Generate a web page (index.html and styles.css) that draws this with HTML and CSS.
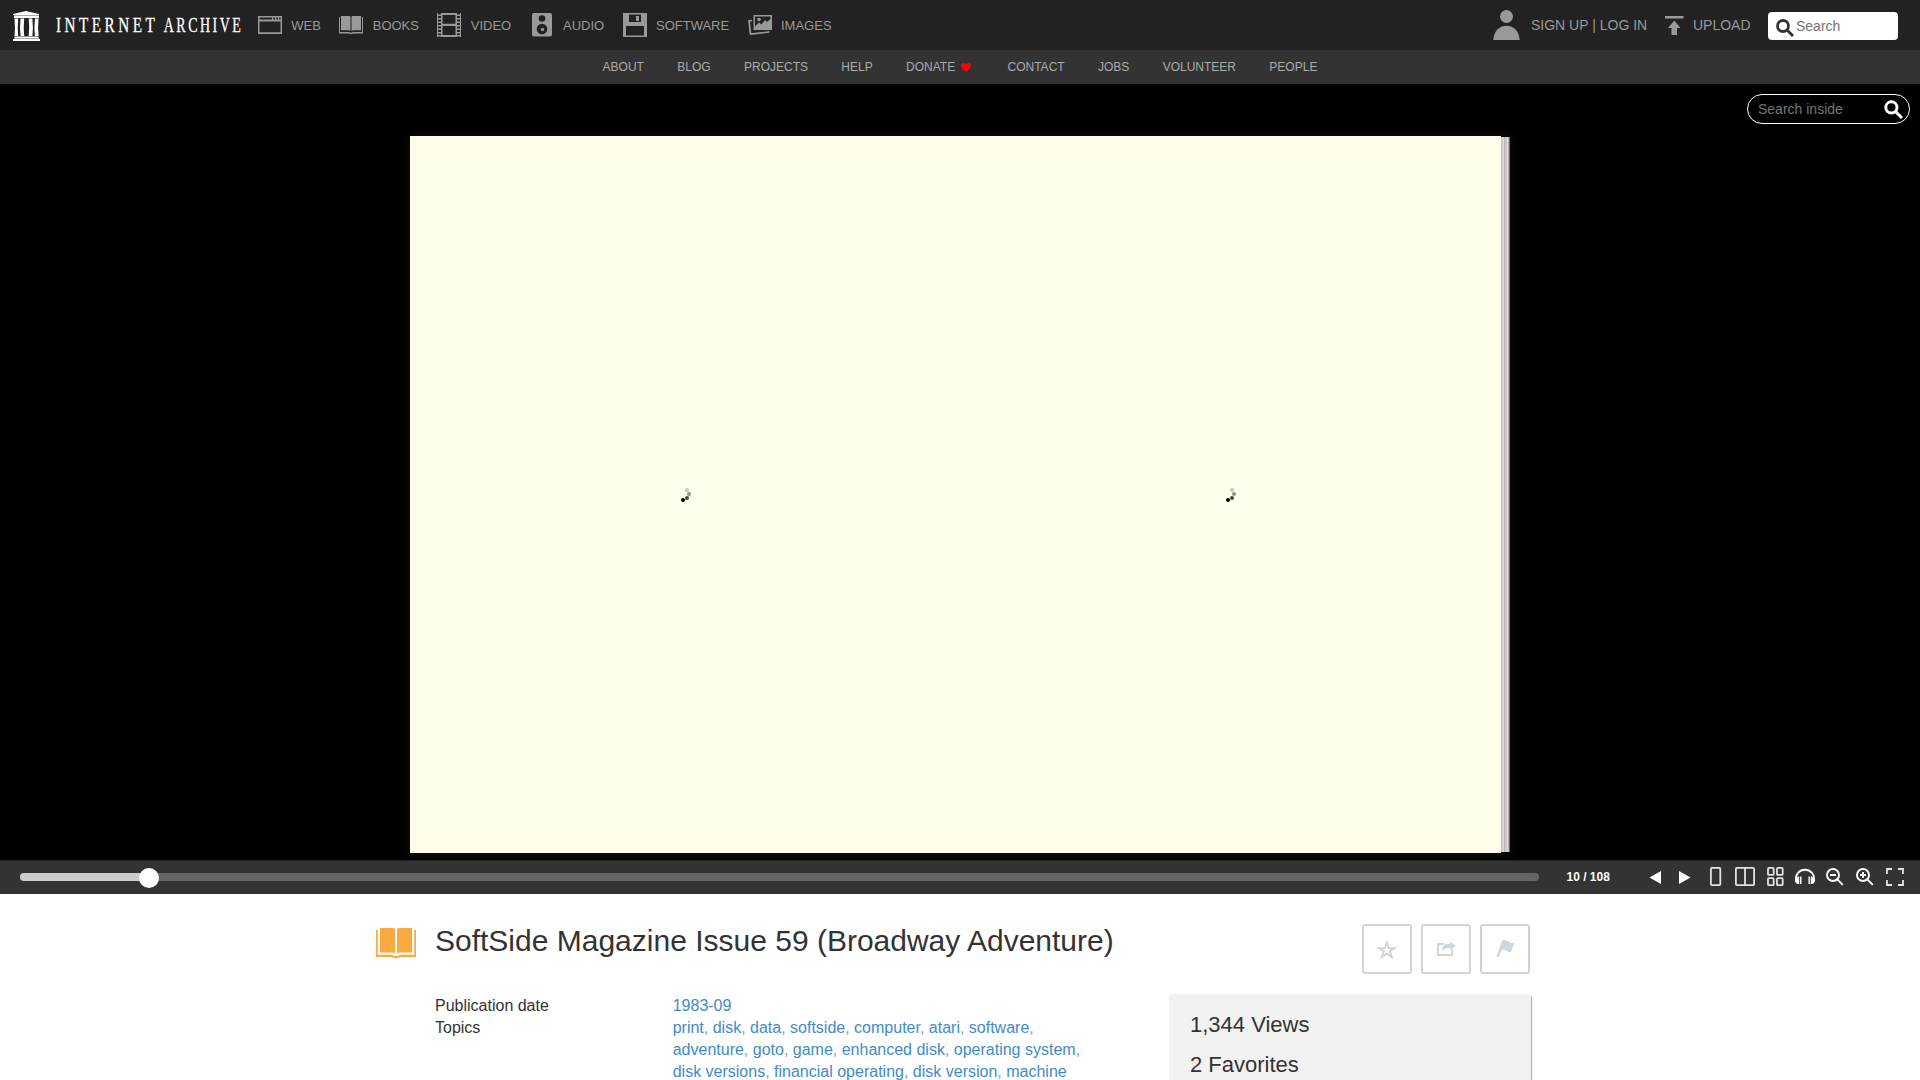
FILE: index.html
```html
<!DOCTYPE html>
<html lang="en">
<head>
<meta charset="utf-8">
<title>SoftSide Magazine Issue 59 (Broadway Adventure)</title>
<link rel="stylesheet" href="styles.css">
</head>
<body>
<header class="topnav">
  <a class="brand">
    <svg class="logo" width="27" height="30" viewBox="0 0 27 30" fill="#fff"><path d="M13 0 26 3v1H0V3zM1 5h25v2H1zM1.500 25.500h24V27h-24zM0 28h27v2H0zM1.500 7.500h3.700l-.5 9.500.5 8H1.500l.5-8zM7.500 7.500h3.700l-.5 9.500.5 8H7.500l-.5-8zM15.700 7.500h3.700l.5 9.500-.5 8h-3.700l.5-9zM21.900 7.500h3.700l-.5 9.500.5 8h-3.700l-.5-8z"/><path d="M1 4h25v1H1zM1 27h25v1H1z" fill="#aaa"/></svg>
    <svg class="wordmark" width="188" height="30" viewBox="0 0 188 30"><text transform="scale(.76 1)" x="0" y="21" textLength="130">INTERNET</text><text transform="scale(.7 1)" x="154" y="21" textLength="110">ARCHIVE</text></svg>
  </a>
  <nav class="media">
    <a><svg width="24" height="26" viewBox="0 0 24 26"><path fill-rule="evenodd" d="M0 4h24v18H0zM1.500 9.500v10.700h21V9.500zM1.500 5.500v2h12.500v-2zM15.300 5.500v2h1.700v-2zM18.300 5.500v2H20v-2zM21.200 5.500v2h1.500v-2z"/></svg><span>WEB</span></a>
    <a><svg width="24" height="26" viewBox="0 0 24 26"><path d="M2 4h8.500q1 0 1 1v14q-1-.7-2-.7H2zM22 4h-8.500q-1 0-1 1v14q1-.7 2-.7H22zM0 5h1v15h9l2 .8 2-.8h9V5h1v16.500h-9.500L12 22.300l-2.500-.8H0z"/></svg><span>BOOKS</span></a>
    <a><svg width="24" height="26" viewBox="0 0 24 26"><path fill-rule="evenodd" d="M4 1h16v24H4zM5.500 3v8.800h13V3zM5.500 14v9h13v-9z"/><path d="M0 1h1v24H0zM23 1h1v24h-1zM1 2.500h3V4H1zM1 6h3v1.500H1zM1 9.500h3V11H1zM1 13h3v1.500H1zM1 16.500h3V18H1zM1 20h3v1.500H1zM1 23h3v1.500H1zM20 2.500h3V4h-3zM20 6h3v1.500h-3zM20 9.500h3V11h-3zM20 13h3v1.500h-3zM20 16.500h3V18h-3zM20 20h3v1.500h-3zM20 23h3v1.500h-3z"/></svg><span>VIDEO</span></a>
    <a><svg width="24" height="26" viewBox="0 0 24 26"><rect x="2" y="1" width="20" height="23.500" rx="2"/><g fill="#222"><circle cx="12" cy="6.500" r="3.300"/><circle cx="12" cy="17" r="5.300"/></g><circle cx="12.500" cy="17.500" r="1.700"/></svg><span>AUDIO</span></a>
    <a><svg width="24" height="26" viewBox="0 0 24 26"><path fill-rule="evenodd" d="M0 1h24v24H0zM6 2.500v7.500h12V2.500zM3 14v9.500h18V14z"/><path d="M13 4h3v5h-3z"/></svg><span>SOFTWARE</span></a>
    <a><svg width="24" height="26" viewBox="0 0 24 26"><path fill-rule="evenodd" d="M5.500 3H24v15H5.500zM7 4.400v10l4-4 2.500 2 3.500-4.500 2 2 3.500-3V4.400z"/><circle cx="11" cy="7.500" r="1.800"/><path d="m4 8.500-3 .3 1.500 13.300L20.500 20v-1" fill="none" stroke="#999" stroke-width="1.700"/></svg><span>IMAGES</span></a>
  </nav>
  <div class="account">
    <svg width="27" height="30" viewBox="0 0 27 30"><circle cx="13.500" cy="6.500" r="6.500"/><path d="M.3 30C1 21 6 15.700 13.500 15.700S26 21 26.700 30z"/></svg>
    <a class="login">SIGN UP | LOG IN</a>
    <svg width="19" height="20" viewBox="0 0 19 20"><path d="M0 0h18.500v2.500H0zM9.300 4.500 15.500 12H12v7H6.500v-7H3z"/></svg>
    <a class="upload">UPLOAD</a>
    <div class="search"><svg width="18" height="18" viewBox="0 0 18 18"><circle cx="7" cy="7" r="5.500"/><path d="m11 11 6 6"/></svg><span>Search</span></div>
  </div>
</header>
<nav class="subnav"><a>ABOUT</a><a>BLOG</a><a>PROJECTS</a><a>HELP</a><a>DONATE<svg width="10" height="9" viewBox="0 0 10 9"><path fill="red" d="M5 9C3 6.700 0 5.200 0 2.500 0-.4 4-.8 5 1.200 6-.8 10-.4 10 2.500 10 5.200 7 6.700 5 9z"/></svg></a><a>CONTACT</a><a>JOBS</a><a>VOLUNTEER</a><a>PEOPLE</a></nav>

<main class="reader">
  <div class="inside"><span>Search inside</span><svg width="19" height="19" viewBox="0 0 18 18"><circle cx="7" cy="7" r="5.300"/><path d="m11 11 6 6"/></svg></div>
  <div class="book">
    <div class="leaf"><svg width="12" height="16" viewBox="0 0 12 16"><circle cx="6" cy="4" r="2" fill="#c8c7bb"/><circle cx="8" cy="8" r="2" fill="#92918a"/><circle cx="6" cy="12" r="2" fill="#484843"/><circle cx="2" cy="14" r="2" fill="#000"/></svg></div>
    <div class="leaf"><svg width="12" height="16" viewBox="0 0 12 16"><circle cx="6" cy="4" r="2" fill="#c8c7bb"/><circle cx="8" cy="8" r="2" fill="#92918a"/><circle cx="6" cy="12" r="2" fill="#484843"/><circle cx="2" cy="14" r="2" fill="#000"/></svg></div>
    <div class="edge"></div>
  </div>
</main>
<div class="controls">
  <div class="track"><div class="fill"></div><div class="handle"></div></div>
  <span class="page">10 / 108</span>
  <div class="tools">
    <svg viewBox="0 0 30 34"><path class="solid" d="M9.500 17.500 21 11v13z"/></svg>
    <svg viewBox="0 0 30 34"><path class="solid" d="M20.500 17.500 9 11v13z"/></svg>
    <svg viewBox="0 0 30 34"><rect x="10.900" y="7.900" width="9.400" height="17.200" rx="1"/></svg>
    <svg viewBox="0 0 30 34"><rect x="5.900" y="7.900" width="18.200" height="17.200" rx="1"/><path d="M15 8v17"/></svg>
    <svg viewBox="0 0 30 34"><rect x="8" y="7.900" width="5.700" height="7" rx="1"/><rect x="17" y="7.900" width="5.700" height="7" rx="1"/><rect x="8" y="18.200" width="5.700" height="7" rx="1"/><rect x="17" y="18.200" width="5.700" height="7" rx="1"/></svg>
    <svg viewBox="0 0 30 34"><path d="M6 21c-2-15 20-15 18 0" stroke="#fff"/><path class="solid" d="M8 16.500h1.200V24H8q-3-1-3-3.500T8 16.500zM10 16.500h1.500V24H10zM22 16.500h-1.200V24H22q3-1 3-3.500t-3-4zM20 16.500h-1.500V24H20z"/></svg>
    <svg viewBox="0 0 30 34" class="bright"><circle cx="13" cy="15" r="6"/><path d="M10 15h6M17.300 19.300l5.500 5.500"/></svg>
    <svg viewBox="0 0 30 34" class="bright"><circle cx="13" cy="15" r="6"/><path d="M10 15h6M13 12v6M17.300 19.300l5.500 5.500"/></svg>
    <svg viewBox="0 0 30 34"><path d="M7 14V9h5M18 9h5v5M23 20v5h-5M12 25H7v-5"/></svg>
  </div>
</div>

<section class="details">
  <svg class="texts" width="40" height="31" viewBox="0 0 40 31" fill="#fbaa3f"><path d="M4 0h13.500q1.700.2 1.700 2v23.500q-1.700-1-3.500-1H4zM36 0H22.700Q21 .2 21 2v23.500q1.700-1 3.500-1H36zM0 2h1.700v24.700H15l5 1.500 5-1.500h13.300V2H40v27H25l-5 1.500L15 29H0z"/></svg>
  <div class="info">
    <h1>SoftSide Magazine Issue 59 (Broadway Adventure)</h1>
    <dl>
      <dt>Publication date</dt><dd><a>1983-09</a></dd>
      <dt>Topics</dt><dd><a>print</a>, <a>disk</a>, <a>data</a>, <a>softside</a>, <a>computer</a>, <a>atari</a>, <a>software</a>,<br><a>adventure</a>, <a>goto</a>, <a>game</a>, <a>enhanced disk</a>, <a>operating system</a>,<br><a>disk versions</a>, <a>financial operating</a>, <a>disk version</a>, <a>machine</a></dd>
    </dl>
  </div>
  <aside>
    <div class="actions">
      <button><svg viewBox="0 0 46 46"><path fill="none" stroke="#ced6dc" stroke-width="1.900" d="m22.800 16.500 1.900 5.700h6L25.900 25.300l1.900 5.900-5-3.700-5 3.700 1.900-5.900-4.900-3.100h6z"/></svg></button>
      <button><svg viewBox="0 0 46 46"><path d="M14 17h8l-2 2.200h-4V28h12v-3l2-2v7H14z"/><path d="M19 24.500c0-5 4-7.500 8.500-6.500v-2.500L32.500 20l-5 4.300V22c-4-.2-6 .5-8.500 2.500z"/></svg></button>
      <button><svg viewBox="0 0 46 46"><path d="M20.500 13.700c4-.5 6 3.500 11.700 3.300L29 26c-3.500 1-5-3-8.700-2.500L16.300 31.300l-1.900-.5z"/></svg></button>
    </div>
    <div class="stats"><p>1,344 Views</p><p>2 Favorites</p></div>
  </aside>
</section>
</body>
</html>
```
FILE: styles.css
```css
* { box-sizing: border-box; }
html, body { height: 1080px; overflow: hidden; }
body { margin: 0; background: #fff; color: #333; font-family: "Liberation Sans", Arial, sans-serif; }
svg { display: block; flex: none; }

.topnav { height: 50px; background: #222; color: #999; display: flex; align-items: flex-start; padding-left: 13px; }
.brand { display: flex; width: 245px; gap: 16px; padding-top: 11px; }
.wordmark { overflow: visible; }
.wordmark text { font: 20px "Liberation Serif", serif; fill: #fff; stroke: #fff; stroke-width: .3; }
.media { display: flex; gap: 18.500px; font-size: 13px; line-height: 26px; padding-top: 12px; }
.media a { display: flex; gap: 9.300px; }
.media span { padding-top: 1px; }
.media svg { fill: #999; }
.account { display: flex; margin-left: auto; padding: 10px 22px 0 0; font-size: 14px; line-height: 30px; fill: #999; white-space: nowrap; }
.login { margin: 0 17px 0 11px; width: 117px; }
.account > svg + a + svg { margin-top: 6px; }
.upload { width: 58px; margin: 0 17px 0 9px; }
.search { width: 130px; height: 28px; margin-top: 2px; background: #fff; border-radius: 4px; display: flex; padding-left: 8px; gap: 2px; line-height: 28px; color: #757575; }
.search svg { margin-top: 7px; }
.search svg, .inside svg { fill: none; stroke: #333; stroke-width: 2.800; }

.subnav { height: 34px; background: #333; color: #aaa; display: flex; justify-content: center; gap: 33.350px; font-size: 12px; line-height: 34px; }
.subnav a { display: flex; align-items: center; gap: 6px; }
.subnav a:nth-child(5) { margin-right: 3px; }

.reader { height: 776px; background: #000; padding-top: 10px; overflow: hidden; }
.inside { width: 163px; height: 30px; margin: 0 10px 12px auto; border: 1px solid #fff; border-radius: 15px; color: #757575; font-size: 14px; line-height: 28px; display: flex; justify-content: space-between; padding: 0 6px 0 10px; }
.inside svg { stroke: #fff; margin-top: 5px; }
.book { display: flex; width: 1100px; height: 717px; margin-left: 410px; box-shadow: 0 0 10px rgba(60, 60, 50, .35); }
.leaf { width: 545.500px; background: #fffdeb; padding: 350px 0 0 271px; }
.leaf + .leaf { padding-left: 270.500px; }
.edge { width: 9px; height: 715px; margin-top: 1px; background: repeating-linear-gradient(90deg, #ccc8c5 0 2px, #dedbd8 2px 3px, #bcb8b5 3px 4px); border-right: 1px solid #66655a; }

.controls { height: 34px; background: #333; box-shadow: inset 0 1px #222; display: flex; }
.track { width: 1519px; height: 8px; margin: 13px 0 0 20px; border-radius: 4px; background: #666; display: flex; align-items: flex-start; }
.fill { width: 119px; height: 8px; background: #ccc; border-radius: 4px 0 0 4px; box-shadow: 4px 0 #ccc; }
.handle { width: 20px; height: 20px; margin-top: -5px; border-radius: 50%; background: #fff; z-index: 1; }
.page { width: 73px; margin-left: 27.500px; color: #fff; font-size: 12px; font-weight: bold; line-height: 34px; }
.tools { display: flex; margin-left: .5px; }
.tools svg { width: 30px; height: 34px; fill: none; stroke: #e2e2e2; stroke-width: 1.800; }
.tools .solid { fill: #fff; stroke: none; }
.tools .bright { stroke: #fff; stroke-width: 1.900; }

.details { display: flex; padding: 30px 0 0 376px; height: 186px; }
.texts { margin-top: 4px; }
.info { margin-left: 19px; width: 735px; }
h1 { margin: 0 0 37px; font-size: 30px; font-weight: 400; line-height: 34px; color: #333; }
dl { margin: 0; display: grid; grid-template-columns: 237.700px 480px; font-size: 16px; line-height: 22px; }
dt, dd { margin: 0; }
dd { color: #999; white-space: nowrap; }
dd a { color: #428bca; }
aside { width: 361px; }
.actions { display: flex; justify-content: flex-end; gap: 9px; padding-right: 1px; margin-bottom: 20px; }
button { width: 50px; height: 50px; padding: 0; border: 2px solid #ced6dc; border-radius: 3px; background: #fff; }
button svg { width: 46px; height: 46px; fill: #ced6dc; }
.stats { height: 86px; margin-left: -1px; background: #f2f2f2; box-shadow: 1px 1px 1px #aaa; border-radius: 3px 3px 0 0; padding: 11px 0 0 21px; font-size: 22px; line-height: 40px; }
.stats p { margin: 0; }
```
